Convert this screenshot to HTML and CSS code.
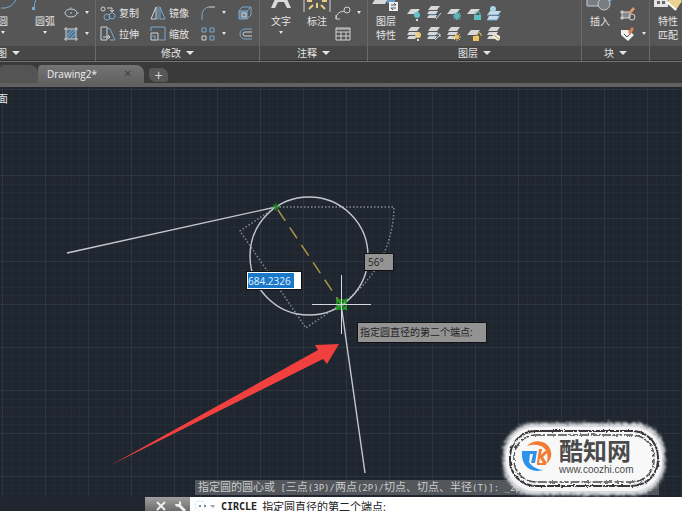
FILE: index.html
```html
<!DOCTYPE html>
<html lang="zh-CN">
<head>
<meta charset="utf-8">
<title>Drawing2</title>
<link rel="stylesheet" href="styles.css">
</head>
<body>
<svg class="defs" aria-hidden="true">
  <symbol id="sheet" viewBox="0 0 16 16"><path d="M5 4h9l-4 5H1z" fill="#d6d8da"/></symbol>
  <symbol id="stack" viewBox="0 0 16 16"><path d="M5 1h9l-3 4H2zM3 6h9l-2 3H1zM3 10h8l-2 3H1z" fill="#d6d8da"/></symbol>
</svg>

<header class="ribbon">
  <section class="panel draw">
    <div class="tools">
      <button class="big"><svg viewBox="0 0 28 24"><path d="M28 4a14 14 0 0 1-16 14" class="b"/></svg>圆<i class="caret"></i></button>
      <button class="big"><svg viewBox="0 0 28 24"><path d="M3 20Q3 5 14 1" class="b"/><rect x="1" y="17" width="3" height="3" fill="#78a9d0"/></svg>圆弧<i class="caret"></i></button>
      <div class="col">
        <button class="small" aria-label="椭圆"><svg viewBox="0 0 16 16"><ellipse cx="8" cy="8" rx="6" ry="4" class="w"/><path d="M8 7v2M7 8h2M8 2v3M13 8h3" class="b"/></svg><i class="caret"></i></button>
        <button class="small" aria-label="图案填充"><svg viewBox="0 0 16 16"><path d="M3 3h10v10H3z" fill="#54738d"/><path d="M4 9l5-5M4 12l8-8M8 12l4-4" class="b"/><path d="M3 1v14M13 1v14M1 3h14M1 13h14" class="w"/></svg><i class="caret"></i></button>
      </div>
    </div>
    <button class="title">绘图<i class="caret large"></i></button>
  </section>

  <section class="panel modify">
    <div class="tools">
      <div class="col">
        <button class="small"><svg viewBox="0 0 16 16"><circle cx="3" cy="4" r="2" class="w"/><path d="M7 3h5v4M10 5l2 2 2-2" class="w"/><circle cx="7" cy="12" r="3" class="b"/><circle cx="12" cy="11" r="3" class="b"/></svg>复制</button>
        <button class="small"><svg viewBox="0 0 16 16"><path d="M1 1h6v13H1zM3 11h7M8 9l2 2-2 2" class="w"/><path d="M8 2l2 1 5 11h-5" class="b"/></svg>拉伸</button>
      </div>
      <div class="col">
        <button class="small"><svg viewBox="0 0 16 16"><path d="M6 2v12H1z" class="w"/><path d="M10 2v12h5zM8 1v14" class="b"/></svg>镜像</button>
        <button class="small"><svg viewBox="0 0 16 16"><path d="M1 5V1h14v13H9" class="b"/><path d="M1 7h7v7H1z" class="w"/><path d="M1 10h4v4" class="b"/></svg>缩放</button>
      </div>
      <div class="col">
        <button class="small" aria-label="圆角"><svg viewBox="0 0 16 16"><path d="M2 15v-4Q2 3 9 2" class="b"/><path d="M9 2h6" class="w"/></svg><i class="caret"></i></button>
        <button class="small" aria-label="阵列"><svg viewBox="0 0 16 16"><path d="M2 2h4v4H2zM10 2h4v4h-4zM10 10h4v4h-4z" class="b"/><path d="M2 10h4v4H2z" class="w"/></svg><i class="caret"></i></button>
      </div>
      <div class="col">
        <button class="small" aria-label="分解"><svg viewBox="0 0 16 16"><path d="M2 6h8v8H2z" fill="#6f7f8c"/><path d="M2 6h8v8H2zM5 2h9v8l-4 4M2 6l3-4M10 6l4-4" class="b"/><path d="M5 8h4v4H5z" class="w"/></svg></button>
        <button class="small" aria-label="偏移"><svg viewBox="0 0 16 16"><path d="M15 3H8a5 5 0 0 0 0 10h7" class="b"/><path d="M15 6H8a2 2 0 0 0 0 4h7" class="w"/></svg></button>
      </div>
    </div>
    <button class="title">修改<i class="caret large"></i></button>
  </section>

  <section class="panel annotate">
    <div class="tools">
      <button class="big"><svg viewBox="0 0 28 24"><path d="M12 0h4l8 18h-4l-3-6h-6l-3 6H4z" fill="#dadada"/></svg>文字<i class="caret"></i></button>
      <button class="big"><svg viewBox="0 0 28 24"><path d="M1 0v22M27 0v22" class="w"/><path d="M14 18v-5M10 15l-4 4M18 15l4 4M9 11H4M19 11h5" stroke="#e7cc83" stroke-width="2"/></svg>标注</button>
      <div class="col">
        <button class="small" aria-label="引线"><svg viewBox="0 0 16 16"><path d="M1 14q0-7 8-8M1 10v4h4" class="w"/><circle cx="12" cy="5" r="3" class="w"/></svg><i class="caret"></i></button>
        <button class="small" aria-label="表格"><svg viewBox="0 0 16 16"><path d="M1 2h14v12H1zM1 6h14M1 10h14M6 6v8M11 6v8M1 3h14" class="w"/></svg></button>
      </div>
    </div>
    <button class="title">注释<i class="caret large"></i></button>
  </section>

  <section class="panel layers">
    <div class="tools">
      <button class="big"><svg viewBox="0 0 28 24"><path d="M6 5h12l-5 9H0z" fill="#d6d8da"/><path d="M15 0h8v13h-8z" fill="#639ac8"/><path d="M17 12h9v9h-9z" fill="#eee"/><path d="M19 15h5l-2-2M24 18h-5l2 2" stroke="#3e5262" fill="none"/></svg>图层<br>特性</button>
      <div class="icons">
        <button aria-label="关"><svg viewBox="0 0 16 16"><use href="#sheet"/><circle cx="11" cy="10" r="3" fill="#64c4ca"/><path d="M10 14h2v2h-2z" fill="#ddd"/></svg></button>
        <button aria-label="隔离"><svg viewBox="0 0 16 16"><use href="#stack"/><path d="M3 10h6" class="b"/><path d="M10 14l5-6M9 12l2 2" class="w"/></svg></button>
        <button aria-label="冻结"><svg viewBox="0 0 16 16"><use href="#sheet"/><path d="M11 7v8M7 11h8M8 8l6 6M14 8l-6 6" stroke="#5cb9bf" stroke-width="1.5"/></svg></button>
        <button aria-label="锁定"><svg viewBox="0 0 16 16"><use href="#sheet"/><path d="M8 10h7v5H8z" fill="#5cbfc4"/><path d="M9 10V8q3-3 5 0v2" stroke="#5cbfc4" fill="none"/></svg></button>
        <button aria-label="置为当前"><svg viewBox="0 0 16 16"><path d="M4 6h11l-3 4H1zM3 11h10l-2 4H1z" fill="#c8dbe9"/><path d="M1 10h11l3-4M1 15h10l3-5" class="b"/><circle cx="7" cy="4" r="3" fill="#a8d5e2"/></svg></button>
        <button aria-label="打开所有图层"><svg viewBox="0 0 16 16"><use href="#stack"/><circle cx="12" cy="9" r="3" fill="#efcf83"/><path d="M11 13h2v2h-2z" fill="#ddd"/></svg></button>
        <button aria-label="取消隔离"><svg viewBox="0 0 16 16"><use href="#stack"/><path d="M3 10h6" class="b"/><path d="M9 14l5-5M11 8h3v3" class="w"/></svg></button>
        <button aria-label="解冻所有图层"><svg viewBox="0 0 16 16"><use href="#stack"/><circle cx="11" cy="11" r="2" fill="#efcf83"/><path d="M11 7v8M7 11h8M8 8l6 6M14 8l-6 6" stroke="#e4b963"/></svg></button>
        <button aria-label="解锁"><svg viewBox="0 0 16 16"><use href="#sheet"/><path d="M7 10h6v5H7z" fill="#edc463"/><path d="M11 10V8q2-3 4 0v2" stroke="#edc463" fill="none"/></svg></button>
        <button aria-label="匹配图层"><svg viewBox="0 0 16 16"><use href="#stack"/><path d="M8 7l6 3v3l-2 2-6-4z" fill="#f1ead4"/><path d="M8 9l5 4" stroke="#b49e69"/></svg></button>
      </div>
    </div>
    <button class="title">图层<i class="caret large"></i></button>
  </section>

  <section class="panel block">
    <div class="tools">
      <button class="big"><svg viewBox="0 0 28 24"><path d="M1 5h16v11H1z" fill="#777d82" stroke="#c8cbce"/><circle cx="18" cy="14" r="6" fill="#777d82" stroke="#c8cbce"/><path d="M20 7h8l-4 5z" fill="#7cadd3"/></svg>插入</button>
      <div class="col">
        <button class="small" aria-label="创建"><svg viewBox="0 0 16 16"><path d="M2 7h8v6H2z" fill="#85898c"/><path d="M2 7h8v6H2zM1 6h2v2H1zM1 12h2v2H1z" class="w"/><circle cx="12" cy="12" r="3" class="w"/><path d="M8 8l5-6 2 2-5 6z" fill="#dc9969"/></svg></button>
        <button class="small" aria-label="编辑属性"><svg viewBox="0 0 16 16"><path d="M1 4h7l6 5-6 6-7-6z" fill="#eee"/><path d="M4 8l3 3 3-3" stroke="#555" fill="none"/><path d="M8 6l4-5 2 2-4 6z" fill="#dc8150"/></svg><i class="caret"></i></button>
      </div>
    </div>
    <button class="title">块<i class="caret large"></i></button>
  </section>

  <section class="panel props">
    <div class="tools">
      <button class="big"><svg viewBox="0 0 28 24"><path d="M0 5h14v12H0z" fill="#e3e3e3"/><path d="M3 11h3v3H3zM8 11h3v3H8z" fill="#666"/><path d="M13 12l8-8 7 7-6 9z" fill="#ecd392"/><path d="M13 12l9 8" stroke="#fff" stroke-width="2"/></svg>特性<br>匹配</button>
    </div>
    <div class="title"></div>
  </section>
</header>

<nav class="tabs">
  <a class="tab previous" href="#" aria-label="Drawing1"></a>
  <a class="tab active" href="#">Drawing2*<span class="close">✕</span></a>
  <button class="add" aria-label="新建">+</button>
</nav>

<main class="canvas">
  <svg class="drawing" width="100%" height="100%">
    <defs>
      <pattern id="grid" x="2" y="45" width="43" height="43" patternUnits="userSpaceOnUse">
        <path d="M9 0v43M17 0v43M26 0v43M34 0v43M0 9h43M0 17h43M0 26h43M0 34h43" transform="translate(.5 .5)" stroke="#232b35"/>
        <path d="M.5 0v43M0 .5h43" stroke="#2c3540"/>
      </pattern>
    </defs>
    <rect width="100%" height="100%" fill="url(#grid)"/>
    <g transform="translate(0 -87)" fill="none">
      <g stroke="#858b95" stroke-width="1.5" stroke-dasharray="1.5 2">
        <path d="M276 207H394A118 118 0 0 1 341 304"/>
        <path d="M276 207L240 231L306 328L341 304"/>
      </g>
      <g stroke="#c4c7ce" stroke-width="1.4">
        <path d="M67 253L276 207M341 304L365 473"/>
        <circle cx="309" cy="256" r="59"/>
      </g>
      <path d="M278 210L341 304" stroke="#a99545" stroke-width="1.5" stroke-dasharray="13 8"/>
      <path d="M337 300h9v9h-9zM336 299l11 11M347 299l-11 11" stroke="#19a51e" stroke-width="1.6"/>
      <path d="M312 304.5H371M341.5 275V334" stroke="#d5d8dc"/>
      <path d="M272 207h8M276 203v8M273 204l6 6M279 204l-6 6" stroke="#28912a"/>
      <path d="M111 465L318 350L315 345L339 344L327 364L323 359Z" fill="#f1403e"/>
    </g>
  </svg>
  <span class="view-label">面</span>
  <div class="length"><input aria-label="直径" value="684.2326"></div>
  <output class="tip angle">56°</output>
  <div class="tip prompt">指定圆直径的第二个端点:</div>
  <div class="history">指定圆的圆心或<code> [</code>三点<code>(3P)/</code>两点<code>(2P)/</code>切点、切点、半径<code>(T)]: _2p </code>指定圆直径的第一个端点<code>:</code></div>

  <div class="watermark">
    <svg class="frame" viewBox="0 0 172 80">
      <defs>
        <filter id="rough" x="-10%" y="-10%" width="120%" height="120%">
          <feTurbulence type="fractalNoise" baseFrequency=".7" numOctaves="2" seed="4"/>
          <feDisplacementMap in="SourceGraphic" scale="9" xChannelSelector="R" yChannelSelector="G"/>
          <feGaussianBlur stdDeviation=".8"/>
        </filter>
        <filter id="ink"><feTurbulence type="fractalNoise" baseFrequency=".3" numOctaves="2" seed="8"/><feDisplacementMap in="SourceGraphic" scale="3" xChannelSelector="R" yChannelSelector="G"/></filter>
      </defs>
      <rect x="5" y="4" width="162" height="72" rx="31" fill="#d9dcdf" filter="url(#rough)"/>
      <rect x="8" y="8" width="156" height="64" rx="29" fill="#f6f6f6"/>
      <g fill="none" filter="url(#ink)">
        <rect x="12" y="12" width="148" height="55" rx="26" stroke="#38383a" stroke-width="2" stroke-dasharray="13 1"/>
        <rect x="16" y="16" width="140" height="47" rx="22" stroke="#4b4b4d" stroke-width="1.5" stroke-dasharray="9 2"/>
      </g>
      <rect x="18" y="18" width="136" height="43" rx="20" fill="#f8f8f8"/>
    </svg>
    <div class="brand">
      <svg class="logo" viewBox="0 0 32 34" fill="none">
        <path d="M6 7C13-1 28 1 30 13C31 18 29 22 25 25C30 14 23 2 6 7Z" fill="#f47b32"/>
        <path d="M25 25h-9" stroke="#f47b32" stroke-width="2"/>
        <path d="M1 13C0 25 8 35 22 31C12 30 6 24 5 13Z" fill="#2e91ea"/>
        <path d="M1 12h15l-2 12h-4l2-9H9L8 24H4l1-9H1z" fill="#2e91ea"/>
        <path d="M18 10h3l-1 6 4-4h4l-6 6 4 6h-4l-3-5-1 5h-2z" fill="#f47b32"/>
      </svg>
      <div class="brand-text"><strong>酷知网</strong><span>www.coozhi.com</span></div>
    </div>
  </div>
</main>

<footer class="command">
  <div class="handle">
    <button aria-label="关闭"><svg viewBox="0 0 12 12"><path d="M2 2l8 8M10 2l-8 8" stroke="#eee" stroke-width="2"/></svg></button>
    <button aria-label="自定义"><svg viewBox="0 0 12 12"><path d="M5 5l6 6" stroke="#eee" stroke-width="3"/><path d="M5 1v3H1q0 3 4 3 3-2 2-5z" fill="#eee"/></svg></button>
  </div>
  <div class="entry">
    <svg viewBox="0 0 22 12"><circle cx="6" cy="6" r="5" fill="none" stroke="#c5d5e4" stroke-dasharray="2 2"/><path d="M6 5v2M11 5v2" stroke="#6f8da9" stroke-width="2"/><path d="M16 5h5l-2 3z" fill="#9aa1a8"/></svg>
    <strong>CIRCLE</strong><span>指定圆直径的第二个端点:</span>
  </div>
</footer>
</body>
</html>
```
FILE: styles.css
```css
* { box-sizing: border-box; }

body {
  margin: 0;
  height: 100vh;
  display: flex;
  flex-direction: column;
  overflow: hidden;
  background: #20262f;
  color: #e4e4e4;
  font: 10px/14px "Open Sans", "Noto Sans CJK SC", sans-serif;
}

button, input {
  margin: 0;
  padding: 0;
  border: 0;
  background: none;
  color: inherit;
  font: inherit;
}

.defs { display: none; }
.w { fill: none; stroke: #d0d2d4; }
.b { fill: none; stroke: #78a9d0; }

/* Ribbon */
.ribbon {
  display: flex;
  flex: none;
  margin-left: -88px;
  border-bottom: 1px solid #737373;
}

.panel {
  flex: none;
  border-right: 1px solid #6a6a6a;
  box-shadow: inset -1px 0 #3d3d3d;
}

.draw { width: 184px; }
.modify { width: 164px; }
.annotate { width: 108px; }
.layers { width: 214px; }
.block { width: 68px; }
.props { flex: 1; border-right: 0; }

.tools {
  display: flex;
  height: 46px;
  overflow: hidden;
  background: #565656;
}

.draw .tools { justify-content: flex-end; padding-right: 6px; }
.draw .big:first-child { margin-right: 6px; }
.modify .tools { padding-left: 4px; gap: 11px; }
.annotate .tools { padding-left: 3px; }
.block .tools { gap: 2px; }

.title {
  display: flex;
  align-items: center;
  justify-content: center;
  gap: 5px;
  width: 100%;
  height: 15px;
  background: #474747;
  border-bottom: 1px solid #303030;
}

.big {
  display: flex;
  flex: none;
  flex-direction: column;
  align-items: center;
  width: 36px;
}

.big svg { width: 28px; height: 24px; flex: none; margin-top: -10px; }
.big .caret { margin-top: 3px; }

.col { padding-top: 2px; }

.small {
  display: flex;
  align-items: center;
  gap: 3px;
  height: 21px;
}

.small svg { width: 16px; height: 16px; flex: none; }
.small .caret { margin-left: 3px; }

.caret {
  border: solid transparent;
  border-width: 3px 2px 0;
  border-top-color: #e4e4e4;
}

.caret.large { border-width: 4px 4px 0; }

.icons {
  display: grid;
  grid-template: repeat(2, 21px) / repeat(5, 20px);
  place-items: center;
  padding-top: 2px;
}

.icons svg { display: block; width: 16px; height: 16px; }

/* Drawing tabs */
.tabs {
  display: flex;
  flex: none;
  height: 25px;
  padding-top: 3px;
  background: #3a3a3a;
  border-bottom: 4px solid #616161;
}

.tab {
  display: flex;
  align-items: center;
  justify-content: space-between;
  color: #f0f0f0;
  text-decoration: none;
  border-radius: 4px 8px 0 0;
}

.previous { width: 38px; background: #545454; }

.active {
  width: 106px;
  padding: 0 12px 0 9px;
  background: linear-gradient(#747474, #616161);
}

.close { color: #414141; font: 10px/14px "DejaVu Sans", sans-serif; }

.add {
  width: 19px;
  height: 14px;
  margin: 3px 5px;
  border-radius: 3px 7px 3px 7px;
  background: #575757;
  color: #d8d8d8;
  font: 14px/14px "Liberation Sans", sans-serif;
}

/* Drawing area */
.canvas { position: relative; flex: 1; min-height: 0; }
.drawing { position: absolute; inset: 0; }

.view-label {
  position: absolute;
  left: -3px;
  top: 5px;
  font-size: 11px;
}

.length, .tip, .history, .watermark { position: absolute; }

.length {
  left: 246px;
  top: 184px;
  width: 56px;
  padding: 1px;
  background: #fff;
  border: 1px solid #111;
}

.length input {
  display: block;
  width: 46px;
  height: 15px;
  background: #1979c8;
  color: #e4f2ff;
}

.tip {
  background: #939393;
  border: 1px solid #111;
  color: #222;
  padding: 1px 3px;
}

.angle { left: 364px; top: 166px; width: 30px; height: 18px; }
.prompt { left: 357px; top: 235px; width: 130px; padding: 2px; height: 21px; }

.history {
  left: 195px;
  bottom: 2px;
  padding: 0 6px 0 3px;
  white-space: nowrap;
  font-size: 11px;
  background: #53575c;
  color: #cbcccd;
}

.history code { font: 9px/14px "DejaVu Sans Mono", monospace; white-space: pre; }

/* Site badge */
.watermark { left: 498px; top: 332px; width: 172px; height: 80px; }
.frame { position: absolute; inset: 0; width: 100%; height: 100%; }

.brand {
  position: relative;
  display: flex;
  gap: 6px;
  padding: 20px 0 0 23px;
}

.logo { width: 32px; height: 34px; }
.brand-text { display: flex; flex-direction: column; color: #4b4b4b; }
.brand-text strong { font-size: 24px; line-height: 24px; }
.brand-text span { font: 10px/14px "Liberation Sans", sans-serif; }

/* Command line */
.command {
  display: flex;
  flex: none;
  height: 14px;
  margin-left: 145px;
  overflow: hidden;
}

.handle {
  display: flex;
  gap: 7px;
  width: 45px;
  padding: 3px 0 0 10px;
  background: linear-gradient(#a0a0a0, #6c6c6c);
}

.handle svg { display: block; width: 12px; height: 12px; }

.entry {
  display: flex;
  flex: 1;
  gap: 5px;
  padding: 3px 0 0 4px;
  background: #fff;
  color: #222;
  font-size: 11px;
}

.entry svg { width: 22px; height: 12px; }
.entry strong { font: bold 10px/14px "DejaVu Sans Mono", monospace; }
```
